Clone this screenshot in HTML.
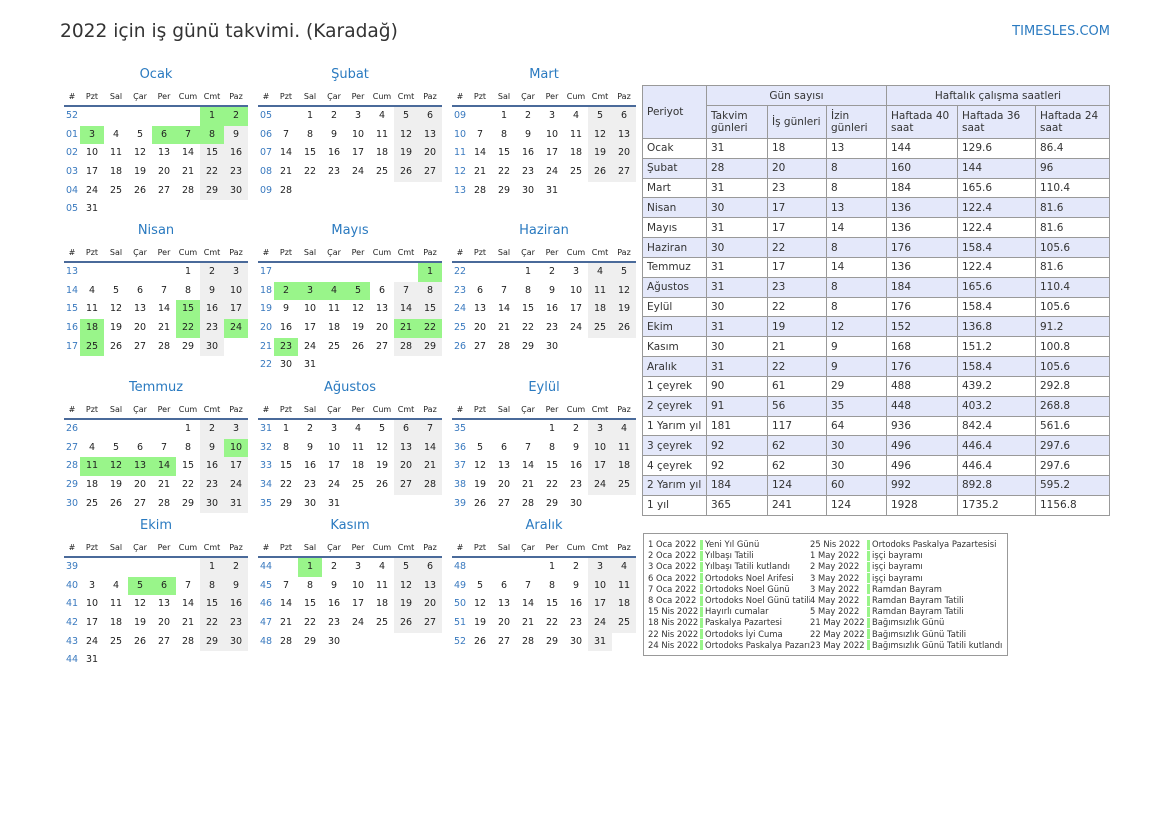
<!DOCTYPE html>
<html><head><meta charset="utf-8"><style>
*{margin:0;padding:0;box-sizing:border-box}
body{width:1169px;height:827px;background:#fff;position:relative;font-family:"DejaVu Sans","Liberation Sans",sans-serif;color:#222;overflow:hidden}
#title{position:absolute;left:60px;top:21px;font-size:18.6px;color:#333}
#site{position:absolute;right:59px;top:24px;font-size:13px;color:#2a7ac0}
.m{position:absolute;width:184px}
.mt{height:23px;text-align:center;font-size:13px;color:#2a7ac0;line-height:23px;margin-top:-11px}
.hd{display:flex;height:21px;font-size:8px;line-height:21px;border-bottom:2px solid #4a6a9a}
.hd div,.r div{width:24px;text-align:center}
.hd div:first-child,.r div:first-child{width:16px}
.r{display:flex;height:18.65px;line-height:18.65px;font-size:9.5px}
.r div:first-child{color:#3a7abf;text-align:left;padding-left:2px}
.w{background:#efefef}
.g{background:#99f58a}
table{position:absolute;left:642px;top:85px;border-collapse:collapse;font-size:10.5px;color:#333}
td{border:1px solid #999;padding:0 4px;height:19.84px;line-height:12px}
.b td,td.h{background:#e4e8fa}
#hol{position:absolute;left:643px;top:533px;width:365px;height:123px;border:1px solid #999;font-size:8.4px;color:#333}
.hr{position:absolute;height:11px;line-height:11px;white-space:nowrap}
.bar{position:absolute;width:3px;height:10px;background:#99f58a}
</style></head><body>
<div id="title">2022 için iş günü takvimi. (Karadağ)</div>
<div id="site">TIMESLES.COM</div>
<div id="cal"></div>
<table>
<tr><td class="h" rowspan="2" style="width:64px">Periyot</td><td class="h" colspan="3" style="text-align:center;height:20px">Gün sayısı</td><td class="h" colspan="3" style="text-align:center">Haftalık çalışma saatleri</td></tr>
<tr><td class="h" style="width:61px;height:33px">Takvim<br>günleri</td><td class="h" style="width:59px">İş günleri</td><td class="h" style="width:60px">İzin<br>günleri</td><td class="h" style="width:71px">Haftada 40<br>saat</td><td class="h" style="width:78px">Haftada 36<br>saat</td><td class="h" style="width:74px">Haftada 24<br>saat</td></tr>
<tbody id="tb"></tbody>
</table>
<div id="hol"></div>
<script>
var months=[["Ocak",5,31,52,{1:1,2:1,3:1,6:1,7:1,8:1}],["Şubat",1,28,5,{}],["Mart",1,31,9,{}],
["Nisan",4,30,13,{15:1,18:1,22:1,24:1,25:1}],["Mayıs",6,31,17,{1:1,2:1,3:1,4:1,5:1,21:1,22:1,23:1}],["Haziran",2,30,22,{}],
["Temmuz",4,31,26,{10:1,11:1,12:1,13:1,14:1}],["Ağustos",0,31,31,{}],["Eylül",3,30,35,{}],
["Ekim",5,31,39,{5:1,6:1}],["Kasım",1,30,44,{1:1}],["Aralık",3,31,48,{}]];
var xs=[64,258,452],ys=[74,230,387,525],h="";
months.forEach(function(m,i){
 var s='<div class="m" style="left:'+xs[i%3]+'px;top:'+ys[Math.floor(i/3)]+'px"><div class="mt">'+m[0]+'</div><div class="hd"><div>#</div><div>Pzt</div><div>Sal</div><div>Çar</div><div>Per</div><div>Cum</div><div>Cmt</div><div>Paz</div></div>';
 var d=1-m[1],wk=m[3];
 while(d<=m[2]){s+='<div class="r"><div>'+(wk<10?'0'+wk:wk)+'</div>';
  for(var c=0;c<7;c++,d++){var v=d>=1&&d<=m[2];var cl=v?(m[4][d]?'g':(c>4?'w':'')):'';s+='<div class="'+cl+'">'+(v?d:'')+'</div>';}
  s+='</div>';wk=(wk==52?1:wk+1);}
 h+=s+'</div>';});
document.getElementById('cal').innerHTML=h;
var rows=[["Ocak",31,18,13,144,129.6,86.4],["Şubat",28,20,8,160,144,96],["Mart",31,23,8,184,165.6,110.4],["Nisan",30,17,13,136,122.4,81.6],["Mayıs",31,17,14,136,122.4,81.6],["Haziran",30,22,8,176,158.4,105.6],["Temmuz",31,17,14,136,122.4,81.6],["Ağustos",31,23,8,184,165.6,110.4],["Eylül",30,22,8,176,158.4,105.6],["Ekim",31,19,12,152,136.8,91.2],["Kasım",30,21,9,168,151.2,100.8],["Aralık",31,22,9,176,158.4,105.6],["1 çeyrek",90,61,29,488,439.2,292.8],["2 çeyrek",91,56,35,448,403.2,268.8],["1 Yarım yıl",181,117,64,936,842.4,561.6],["3 çeyrek",92,62,30,496,446.4,297.6],["4 çeyrek",92,62,30,496,446.4,297.6],["2 Yarım yıl",184,124,60,992,892.8,595.2],["1 yıl",365,241,124,1928,1735.2,1156.8]];
var t="";rows.forEach(function(r,i){t+='<tr'+(i%2?' class="b"':'')+'>'+r.map(function(x){return '<td>'+x+'</td>'}).join('')+'</tr>'});
document.getElementById('tb').innerHTML=t;
var hl=[["1 Oca 2022","Yeni Yıl Günü","25 Nis 2022","Ortodoks Paskalya Pazartesisi"],["2 Oca 2022","Yılbaşı Tatili","1 May 2022","işçi bayramı"],["3 Oca 2022","Yılbaşı Tatili kutlandı","2 May 2022","işçi bayramı"],["6 Oca 2022","Ortodoks Noel Arifesi","3 May 2022","işçi bayramı"],["7 Oca 2022","Ortodoks Noel Günü","3 May 2022","Ramdan Bayram"],["8 Oca 2022","Ortodoks Noel Günü tatili","4 May 2022","Ramdan Bayram Tatili"],["15 Nis 2022","Hayırlı cumalar","5 May 2022","Ramdan Bayram Tatili"],["18 Nis 2022","Paskalya Pazartesi","21 May 2022","Bağımsızlık Günü"],["22 Nis 2022","Ortodoks İyi Cuma","22 May 2022","Bağımsızlık Günü Tatili"],["24 Nis 2022","Ortodoks Paskalya Pazarı","23 May 2022","Bağımsızlık Günü Tatili kutlandı"]];
var o="";hl.forEach(function(r,i){var y=5+i*11.2;
o+='<div class="hr" style="left:4px;top:'+y+'px">'+r[0]+'</div><div class="bar" style="left:56px;top:'+(y+0.5)+'px"></div><div class="hr" style="left:61px;top:'+y+'px;width:105px;overflow:hidden">'+r[1]+'</div>';
o+='<div class="hr" style="left:166px;top:'+y+'px">'+r[2]+'</div><div class="bar" style="left:223px;top:'+(y+0.5)+'px"></div><div class="hr" style="left:228px;top:'+y+'px">'+r[3]+'</div>';});
document.getElementById('hol').innerHTML=o;
</script>
</body></html>
